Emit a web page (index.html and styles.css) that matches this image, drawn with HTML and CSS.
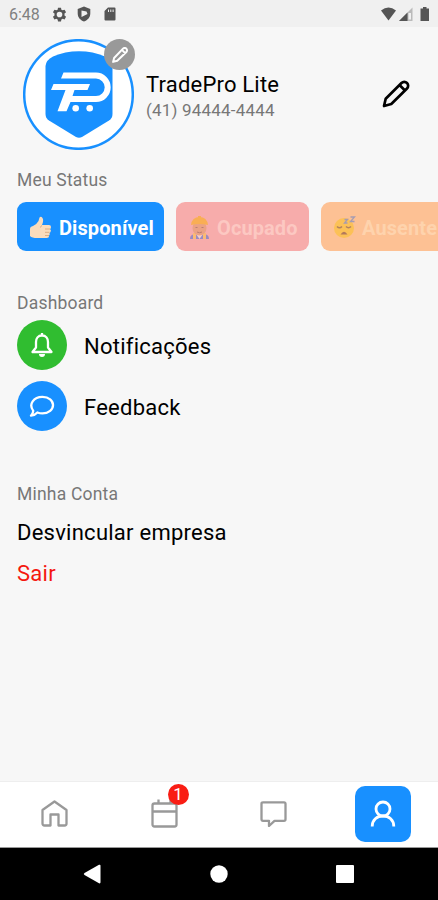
FILE: index.html
```html
<!DOCTYPE html>
<html lang="pt-BR">
<head>
    <meta charset="UTF-8">
    <title>TradePro Lite</title>
    <link rel="stylesheet" href="styles.css">
</head>
<body>
    <header class="status-bar">
        <span class="clock">6:48</span>
        <svg class="gear" width="15" height="15" viewBox="0 0 24 24"><path fill-rule="evenodd" d="M9.6 1h4.8l.6 3.2 2 1.1 3.100-1.100 2.400 4.200-2.500 2.100v3l2.500 2.100-2.400 4.200-3.100-1.100-2 1.100-.6 3.200H9.600L9 19.800l-2-1.100-3.100 1.100-2.400-4.200L4 13.500v-3L1.500 8.400l2.400-4.200L7 5.300l2-1.100zM12 7.500a4.500 4.500 0 1 0 0 9 4.500 4.500 0 0 0 0-9z"/></svg>
        <svg class="shield" width="14" height="16" viewBox="0 0 14 16"><path fill-rule="evenodd" d="M7 .5l6.300 2.400v4.600c0 3.700-2.500 6.700-6.300 8-3.800-1.300-6.300-4.300-6.300-8V2.900zM4.500 4.500v6.500L10.500 8l-1-2.500z"/></svg>
        <svg class="card" width="12" height="14" viewBox="0 0 12 14"><path fill-rule="evenodd" d="M4 .5h6.500q1 0 1 1v11q0 1-1 1h-9q-1 0-1-1V4zM4 2.500v2.500h1V2.500zM6.300 2.500v2.500h1V2.500zM8.600 2.500v2.500h1V2.500z"/></svg>
        <svg class="signals" width="50" height="15" viewBox="0 0 50 15">
            <path d="M1 3.500Q8.500-2.500 16 3.500L8.500 13.500z"/>
            <path opacity=".35" d="M19 14L32.500.5V14z"/>
            <path d="M19 14l8.500-8.500V14z"/>
            <path fill="#f0f0f0" d="M28.500 6h2.500v6.500h-2.500z"/>
            <path d="M43 0h3.500v1.500H49V14h-8.500V1.500H43z"/>
        </svg>
    </header>

    <main>
        <section class="profile">
            <div class="avatar">
                <svg width="111" height="111" viewBox="0 0 111 111">
                    <circle cx="55.500" cy="55.500" r="54.300" fill="#fff" stroke="#1890ff" stroke-width="2.500"/>
                    <path fill="#1890ff" d="M22.500 27Q23 21 30 17.500 42 12.300 56 12.300T82 17.500Q89 21 89.500 27V75Q89.500 79 86 81.500L59 98Q56 99.500 53 98L26 81.500Q22.500 79 22.500 75z"/>
                    <path fill="#fff" d="M40.500 33.600H73A14.700 14.700 0 0 1 73 63H47.500L43.500 72.300H34.500L42.500 51H28L30.500 45H67L64.500 51H51.500L49.500 57H73A8.700 8.700 0 0 0 73 39.600H38z"/>
                    <circle cx="52.700" cy="69.300" r="3.300" fill="#fff"/>
                    <circle cx="66.700" cy="69.300" r="3.300" fill="#fff"/>
                </svg>
                <span class="avatar-edit">
                    <svg width="16" height="16" viewBox="0 0 29 29" fill="none" stroke="#fff" stroke-width="3.600" stroke-linejoin="round"><path d="M2 27l1.800-7L20 3a4 4 0 0 1 6 6L9.500 24.800zM18 5.200l6 6"/></svg>
                </span>
            </div>
            <div class="profile-info">
                <div class="name">TradePro Lite</div>
                <div class="phone">(41) 94444-4444</div>
            </div>
            <svg class="edit" width="28" height="28" viewBox="0 0 28 28" fill="none" stroke="#000" stroke-width="2.700" stroke-linejoin="round"><path d="M2 26l1.700-7.300L19.500 3a3.800 3.800 0 0 1 5.500 5.500L9.300 24zM17.500 5l5.500 5.500"/></svg>
        </section>

        <h2 class="label">Meu Status</h2>
        <div class="statuses">
            <div class="status available">
                <svg width="23" height="23" viewBox="0 0 23 23">
                    <path fill="#fadcbc" d="M1 13Q1 10.500 4 10 8 8 9.500 5L10.500 1.500Q12 0 13.500 2T13 9H20q2 0 2 2t-1 2q1.500 1 .7 2.500T20.500 17q.8 1.500-.5 2.500 .2 2.500-2.500 2.500H8Q3 22 1 20z"/>
                    <path fill="none" stroke="#dcae82" d="M13 9.500q-1.500 .5-1.500 2M16 13h5M16 16.300h4.500M16 19.500h4"/>
                </svg>
                <span>Disponível</span>
            </div>
            <div class="status busy">
                <svg width="23" height="23" viewBox="0 0 23 23">
                    <path fill="#4169d8" d="M2 23q0-5 6-5h7q6 0 6 5z"/>
                    <path fill="#ffc83d" d="M5 17h3v6H5zM15 17h3v6h-3z"/>
                    <path fill="#f5f0e8" d="M8 18h7l-3.500 5z"/>
                    <ellipse cx="11.500" cy="12" rx="7" ry="7.500" fill="#e09a60"/>
                    <path fill="#fbb000" d="M3 9Q4 1 11.500 1T20 9q-8.500-2-17 0zM10 0h3v5h-3z"/>
                    <path fill="none" stroke="#81513e" d="M7.500 11.500h2M13.500 11.500h2M9 16q2.500 1.500 5 0"/>
                </svg>
                <span>Ocupado</span>
            </div>
            <div class="status away">
                <svg width="23" height="23" viewBox="0 0 23 23">
                    <circle cx="11" cy="12" r="10" fill="#fcc21b"/>
                    <path fill="none" stroke="#6b4529" stroke-width="1.500" d="M4 10.500q2.500 2.500 5 0M13 10.500q2.500 2.500 5 0"/>
                    <path fill="#6b3424" d="M7.500 18.500q3.500-5.500 7 0z"/>
                    <path fill="none" stroke="#5279d0" stroke-width="1.300" d="M11.500 3.500h3l-3 3.500h3M17.500 1h4l-4 4.500h4"/>
                </svg>
                <span>Ausente</span>
            </div>
        </div>

        <h2 class="label label-dashboard">Dashboard</h2>
        <div class="item">
            <span class="round green">
                <svg width="24" height="26" viewBox="0 0 24 26" fill="none" stroke="#fff" stroke-width="2.300" stroke-linejoin="round"><path d="M12 3.500C8 3.500 6 6.500 6 10v5.500L2.500 20h19L18 15.500V10c0-3.500-2-6.500-6-6.500zM12 1v2.500"/><path fill="#fff" stroke="none" d="M9 22h6q0 3-3 3t-3-3z"/></svg>
            </span>
            <span class="item-text">Notificações</span>
        </div>
        <div class="item">
            <span class="round blue">
                <svg width="26" height="23" viewBox="0 0 28 25" fill="none" stroke="#fff" stroke-width="2.500" stroke-linejoin="round"><path d="M2 22.500Q4.300 20 4.500 17.200C-1 10 5 2 14.500 2 21.500 2 26 6.300 26 11s-4.500 9-11.500 9q-3 0-5.500-1Q6 22.300 2 22.500z"/></svg>
            </span>
            <span class="item-text">Feedback</span>
        </div>

        <h2 class="label label-account">Minha Conta</h2>
        <div class="link">Desvincular empresa</div>
        <div class="link logout">Sair</div>
    </main>

    <nav class="tabs">
        <div class="tab">
            <svg width="27" height="27" viewBox="0 0 27 27"><path d="M1.500 10L13.500 1.500l12 8.500v13.500q0 2-2 2H17.500v-11h-8v11H3.500q-2 0-2-2z"/></svg>
        </div>
        <div class="tab">
            <svg width="27" height="29" viewBox="0 0 27 29"><path d="M3.500 4.500h20q2 0 2 2v19q0 2-2 2h-20q-2 0-2-2v-19q0-2 2-2zM1.500 12.500h24M7.500 .5v4M19.500 .5v4"/></svg>
            <span class="badge">1</span>
        </div>
        <div class="tab">
            <svg width="27" height="27" viewBox="0 0 27 27"><path d="M3 2.300h21q1.500 0 1.500 1.500v15.500q0 1.500-1.500 1.500H14.500L9 26v-5.200H3q-1.500 0-1.500-1.500V3.800q0-1.500 1.500-1.500z"/></svg>
        </div>
        <div class="tab">
            <span class="active">
                <svg width="26" height="28" viewBox="0 0 26 28"><circle cx="13" cy="9" r="7"/><path d="M2.200 26.500C2.200 20 7 16 13 16s10.800 4 10.800 10.500"/></svg>
            </span>
        </div>
    </nav>

    <footer class="android-nav">
        <svg width="18" height="20" viewBox="0 0 18 20"><path d="M1.500 9L16 .8q1.500-.6 1.500 1v16.500q0 1.600-1.500 1L1.500 11Q0 10 1.500 9z"/></svg>
        <svg width="18" height="18" viewBox="0 0 18 18"><circle cx="9" cy="9" r="8.700"/></svg>
        <svg width="18" height="18" viewBox="0 0 18 18"><rect width="18" height="18" rx="1"/></svg>
    </footer>
</body>
</html>
```
FILE: styles.css
```css
body {
    margin: 0;
    height: 900px;
    display: flex;
    flex-direction: column;
    overflow: hidden;
    background-color: #f7f7f7;
    font-family: Roboto, sans-serif;
    color: #000;
}
svg {
    display: block;
    flex-shrink: 0;
}
.status-bar {
    display: flex;
    align-items: center;
    height: 27px;
    box-sizing: border-box;
    padding: 1px 8px 0 9px;
    background-color: #f0f0f0;
    fill: #555;
}
.clock {
    width: 43px;
    color: #808080;
    font-size: 16px;
}
.shield {
    margin-left: 10px;
}
.card {
    margin-left: 13px;
}
.signals {
    margin-left: auto;
}
main {
    flex: 1;
    padding: 12px 0 0 17px;
}
.profile {
    display: flex;
    height: 111px;
    padding: 0 28px 0 6px;
}
.avatar {
    position: relative;
    width: 111px;
}
.avatar-edit {
    position: absolute;
    top: 0;
    left: 81px;
    width: 31px;
    height: 31px;
    border-radius: 50%;
    background-color: #999;
    display: flex;
    align-items: center;
    justify-content: center;
}
.profile-info {
    flex: 1;
    padding: 32px 0 0 12px;
}
.name {
    font-size: 22px;
    line-height: 27px;
    letter-spacing: 0.2px;
}
.phone {
    color: #777;
    font-size: 17px;
    line-height: 25px;
    letter-spacing: 0.2px;
}
.edit {
    margin-top: 41px;
}
.label {
    margin: 19px 0 0;
    color: #777;
    font-size: 17.5px;
    font-weight: 400;
    line-height: 22px;
    letter-spacing: 0.2px;
}
.statuses {
    display: flex;
    gap: 12px;
    margin-top: 11px;
    overflow: hidden;
}
.status {
    display: flex;
    align-items: center;
    gap: 7px;
    flex-shrink: 0;
    height: 49px;
    box-sizing: border-box;
    padding: 2px 0 0 12px;
    border-radius: 9px;
    color: #fff;
    font-size: 20px;
    font-weight: 700;
    letter-spacing: 0.1px;
}
.available {
    width: 147px;
    background-color: #1890ff;
}
.busy {
    width: 133px;
    background-color: #f7acab;
}
.away {
    width: 140px;
    background-color: #fdc194;
}
.busy svg, .away svg {
    opacity: 0.5;
}
.busy span {
    margin-left: -1px;
    color: #fcc8c2;
}
.away span {
    margin-left: -1px;
    color: #fed3ad;
}
.label-dashboard {
    margin-top: 41px;
}
.item {
    display: flex;
    align-items: center;
    gap: 17px;
    height: 50px;
    margin-top: 6px;
}
.item + .item {
    margin-top: 11px;
}
.round {
    width: 50px;
    height: 50px;
    border-radius: 50%;
    display: flex;
    align-items: center;
    justify-content: center;
}
.green {
    background-color: #30bd30;
}
.blue {
    background-color: #1890ff;
}
.item-text, .link {
    font-size: 22px;
    letter-spacing: 0.25px;
}
.item-text {
    padding-top: 2px;
}
.label-account {
    margin-top: 52px;
}
.link {
    margin-top: 14px;
    line-height: 28px;
}
.logout {
    margin-top: 13px;
    color: #f5180f;
}
.tabs {
    display: flex;
    height: 67px;
    box-sizing: border-box;
    padding-bottom: 2px;
    background-color: #fff;
    border-top: 1px solid #eee;
    border-bottom: 1px solid #999;
}
.tab {
    position: relative;
    flex: 1;
    display: flex;
    align-items: center;
    justify-content: center;
    fill: none;
    stroke: #999;
    stroke-width: 2.3;
    stroke-linejoin: round;
}
.badge {
    position: absolute;
    top: 2px;
    left: 58px;
    width: 21px;
    height: 21px;
    border-radius: 50%;
    background-color: #f91d14;
    color: #fff;
    font-size: 17px;
    line-height: 21px;
    text-align: center;
}
.active {
    display: flex;
    align-items: center;
    justify-content: center;
    width: 56px;
    height: 56px;
    border-radius: 10px;
    background-color: #1890ff;
    stroke: #fff;
    stroke-width: 2.8;
}
.android-nav {
    display: flex;
    align-items: center;
    justify-content: space-between;
    height: 52px;
    box-sizing: border-box;
    padding: 0 84px 0 83px;
    background-color: #000;
    fill: #fff;
}
```
